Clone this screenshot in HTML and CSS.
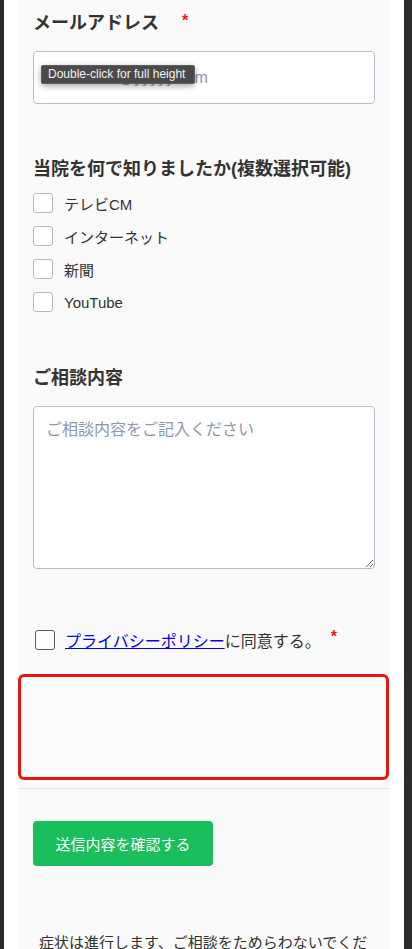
FILE: index.html
```html
<!DOCTYPE html>
<html lang="ja">
<head>
<meta charset="utf-8">
<title>お問い合わせ</title>
<link rel="stylesheet" href="styles.css">
</head>
<body>
<div class="frame">
  <form class="panel">
    <div class="field">
      <label class="field-label" for="email">メールアドレス<span class="req">*</span></label>
      <div class="input-wrap">
        <input class="text-input" id="email" type="email" placeholder="xxxxxxxxx@yyyyy.com">
        <div class="tooltip">Double-click for full height</div>
      </div>
    </div>

    <div class="field field-sources">
      <div class="field-label">当院を何で知りましたか(複数選択可能)</div>
      <div class="check-list">
        <label class="check-row"><input class="box" type="checkbox"><span>テレビCM</span></label>
        <label class="check-row"><input class="box" type="checkbox"><span>インターネット</span></label>
        <label class="check-row"><input class="box" type="checkbox"><span>新聞</span></label>
        <label class="check-row"><input class="box" type="checkbox"><span>YouTube</span></label>
      </div>
    </div>

    <div class="field field-consult">
      <label class="field-label" for="consult">ご相談内容</label>
      <textarea class="text-area" id="consult" placeholder="ご相談内容をご記入ください"></textarea>
    </div>

    <label class="privacy-row">
      <input class="box box-dark" type="checkbox">
      <span class="privacy-text"><a href="#">プライバシーポリシー</a>に同意する。</span>
      <span class="req req-small">*</span>
    </label>

    <div class="captcha-box"></div>

    <hr class="divider">

    <button class="submit" type="button">送信内容を確認する</button>

    <p class="note">症状は進行します、ご相談をためらわないでください。</p>
  </form>
</div>
</body>
</html>
```

FILE: styles.css
```css
* { box-sizing: border-box; }

html, body {
  margin: 0;
  padding: 0;
  height: 949px;
  overflow: hidden;
}

body {
  background: #2c2c2c;
  font-family: "Liberation Sans", "Noto Sans CJK JP", sans-serif;
  color: #333;
}

.frame {
  margin-left: 4px;
  width: 400px;
  height: 949px;
  background: #ffffff;
  padding: 0 15px;
}

.panel {
  background: #fafafa;
  width: 370px;
  height: 949px;
  padding: 10px 14px 0;
  display: flex;
  flex-direction: column;
}

.panel > * {
  flex: none;
}

.field {
  display: flex;
  flex-direction: column;
}

.field-label {
  font-size: 18px;
  font-weight: 700;
  line-height: 27px;
  height: 27px;
  margin-bottom: 14px;
  color: #333;
}

.req {
  color: #e3201b;
  font-weight: 700;
  font-size: 16px;
  margin-left: 23px;
  vertical-align: 3px;
  line-height: 0;
}

.input-wrap {
  position: relative;
}

.text-input {
  display: block;
  width: 342px;
  height: 53px;
  border: 1px solid #b6bccc;
  border-radius: 4px;
  background: #fff;
  padding: 0 12px;
  font-family: inherit;
  font-size: 16px;
  color: #333;
}

.text-input::placeholder,
.text-area::placeholder {
  color: #8e97b0;
}

.tooltip {
  position: absolute;
  left: 8px;
  top: 14px;
  width: 154px;
  height: 19px;
  background: #4a4a4a;
  border: 1px solid #5e5e5e;
  border-radius: 2px;
  box-shadow: 0 2px 6px rgba(0, 0, 0, 0.35);
  color: #f2f2f2;
  font-family: "Liberation Sans", sans-serif;
  font-size: 12px;
  line-height: 17px;
  padding-left: 6px;
  white-space: nowrap;
}

.field-sources {
  margin-top: 52px;
}

.field-sources .field-label {
  margin-bottom: 10px;
}

.check-list {
  display: flex;
  flex-direction: column;
  gap: 13px;
}

.check-row {
  display: flex;
  align-items: center;
  gap: 11px;
  height: 20px;
  font-size: 15px;
  color: #333;
}

.box {
  appearance: none;
  -webkit-appearance: none;
  margin: 0;
  width: 20px;
  height: 20px;
  border: 1px solid #b3b8c9;
  border-radius: 3px;
  background: #fff;
  flex: none;
}

.field-consult {
  margin-top: 53px;
}

.text-area {
  display: block;
  width: 342px;
  height: 163px;
  border: 1px solid #b6bccc;
  border-radius: 4px;
  background: #fff;
  padding: 13px 12px;
  font-family: inherit;
  font-size: 16px;
  line-height: 20px;
  color: #333;
  resize: vertical;
}

.privacy-row {
  margin-top: 61px;
  margin-left: 2px;
  display: flex;
  align-items: center;
  gap: 10px;
  height: 20px;
  font-size: 16px;
}

.box-dark {
  border: 1.5px solid #5a5a5a;
}

.privacy-text a {
  color: #0000ee;
  text-decoration: underline;
}

.req-small {
  margin-left: 0;
  font-size: 16px;
  vertical-align: 0;
  align-self: flex-start;
  line-height: 14px;
}

.captcha-box {
  margin-top: 24px;
  margin-left: -15px;
  width: 371px;
  height: 106px;
  border: 3px solid #e5170d;
  border-radius: 6px;
  background: #fcfcfd;
}

.divider {
  margin: 8px -14px 0;
  border: 0;
  border-top: 1px solid #e3e3ee;
  height: 0;
}

.submit {
  margin-top: 32px;
  align-self: flex-start;
  width: 180px;
  height: 45px;
  border: 0;
  border-radius: 4px;
  background: #1abe5d;
  color: #fff;
  font-family: inherit;
  font-size: 15px;
  padding: 0;
}

.note {
  margin: 63px 0 0 6px;
  font-size: 15px;
  line-height: 27px;
  color: #333;
}
```
